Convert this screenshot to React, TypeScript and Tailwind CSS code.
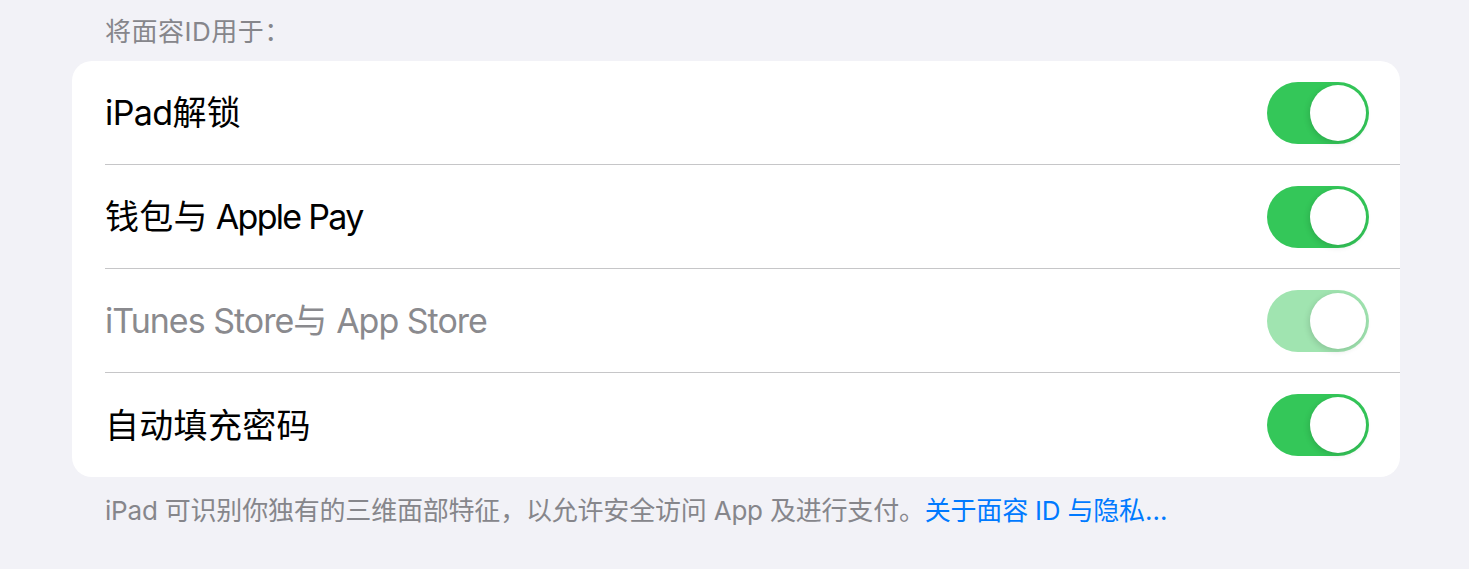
import React from "react";

const font = { fontFamily: 'Inter, "Noto Sans CJK SC", sans-serif' };

function Toggle({ disabled }: { disabled?: boolean }) {
  return (
    <div
      className={`w-[102px] h-[62px] rounded-full flex items-center justify-end pr-[3px] ${
        disabled ? "bg-[#a0e4b0]" : "bg-[#34c759]"
      }`}
    >
      <div className="w-[56px] h-[56px] rounded-full bg-white shadow-[-1px_2px_6px_rgba(0,0,0,0.14)]" />
    </div>
  );
}

type Seg = { t: string; latin?: boolean };

function Row({
  segs,
  disabled,
  last,
  latinTrack = "tracking-[-1.3px]",
}: {
  segs: Seg[];
  disabled?: boolean;
  last?: boolean;
  latinTrack?: string;
}) {
  return (
    <div className="pl-[33px] flex">
      <div
        className={`flex-1 h-[104px] flex items-center justify-between pr-[31px] ${
          last ? "" : "border-b border-[#c6c6c8]"
        }`}
      >
        <span
          className={`text-[34px] tracking-[0.3px] whitespace-pre ${disabled ? "text-[#8a8a8e]" : "text-black"}`}
        >
          {segs.map((s, i) =>
            s.latin ? (
              <span key={i} className={latinTrack}>
                {s.t}
              </span>
            ) : (
              <span key={i}>{s.t}</span>
            )
          )}
        </span>
        <Toggle disabled={disabled} />
      </div>
    </div>
  );
}

export default function App() {
  return (
    <div className="w-[1469px] h-[569px] bg-[#f2f2f7] overflow-hidden" style={font}>
      <div className="pl-[72px] pr-[69px] pt-[16px]">
        <div className="pl-[33px] text-[26px] tracking-[0.5px] leading-[32px] text-[#86868b] h-[45px]">
          将面容ID用于：
        </div>
        <div className="bg-white rounded-[20px] overflow-hidden">
          <Row segs={[{ t: "iPad", latin: true }, { t: "解锁" }]} latinTrack="tracking-[-0.6px]" />
          <Row segs={[{ t: "钱包与" }, { t: " Apple Pay", latin: true }]} latinTrack="tracking-[-1.7px]" />
          <Row
            segs={[{ t: "iTunes Store", latin: true }, { t: "与" }, { t: " App Store", latin: true }]}
            latinTrack="tracking-[-1.0px]"
            disabled
          />
          <Row segs={[{ t: "自动填充密码" }]} last />
        </div>
        <div className="pl-[33px] pt-[18px] text-[26px] tracking-[-0.2px] leading-[32px] text-[#86868b] whitespace-nowrap">
          iPad 可识别你独有的三维面部特征，以允许安全访问 App 及进行支付。
          <span className="text-[#007aff]">关于面容 ID 与隐私…</span>
        </div>
      </div>
    </div>
  );
}
